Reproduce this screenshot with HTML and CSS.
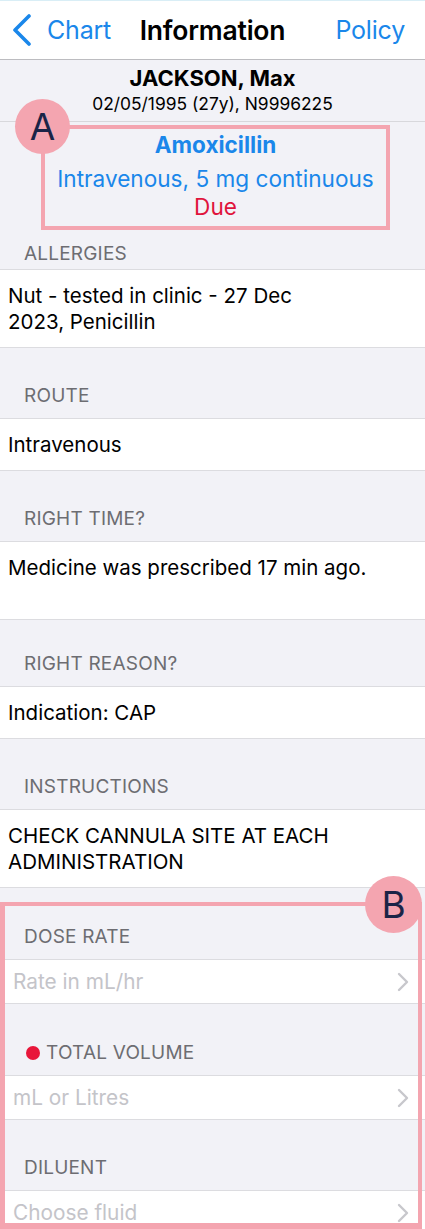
FILE: index.html
```html
<!DOCTYPE html>
<html lang="en">
<head>
<meta charset="utf-8">
<title>Information</title>
<link rel="stylesheet" href="styles.css">
</head>
<body>
<div class="screen">
  <header class="nav">
    <a class="nav-back">
      <svg class="nav-chevron" viewBox="0 0 20 32" aria-hidden="true"><path d="M17 2 L3 16 L17 30" fill="none" stroke="currentColor" stroke-width="3.6" stroke-linecap="round" stroke-linejoin="round"/></svg>
      <span>Chart</span>
    </a>
    <h1 class="nav-title">Information</h1>
    <a class="nav-action">Policy</a>
  </header>

  <section class="patient">
    <div class="patient-name">JACKSON, Max</div>
    <div class="patient-meta">02/05/1995 (27y), N9996225</div>
  </section>

  <section class="drug">
    <div class="callout-a">
      <span class="badge badge-a">A</span>
      <div class="drug-name">Amoxicillin</div>
      <div class="drug-dose">Intravenous, 5 mg continuous</div>
      <div class="drug-status">Due</div>
    </div>
  </section>

  <div class="group-head group-head-first">ALLERGIES</div>
  <div class="cell">Nut - tested in clinic - 27 Dec<br>2023, Penicillin</div>

  <div class="group-head">ROUTE</div>
  <div class="cell">Intravenous</div>

  <div class="group-head">RIGHT TIME?</div>
  <div class="cell cell-tall">Medicine was prescribed 17 min ago.</div>

  <div class="group-head group-head-short">RIGHT REASON?</div>
  <div class="cell">Indication: CAP</div>

  <div class="group-head">INSTRUCTIONS</div>
  <div class="cell">CHECK CANNULA SITE AT EACH<br>ADMINISTRATION</div>

  <div class="form">
    <div class="group-head group-head-wide">DOSE RATE</div>
    <div class="field">
      <span class="field-placeholder">Rate in mL/hr</span>
      <svg class="field-chevron" viewBox="0 0 12 20" aria-hidden="true"><path d="M2 2 L10 10 L2 18" fill="none" stroke="currentColor" stroke-width="2.4" stroke-linecap="round" stroke-linejoin="round"/></svg>
    </div>

    <div class="group-head group-head-wide"><span class="required-dot"></span>TOTAL VOLUME</div>
    <div class="field">
      <span class="field-placeholder">mL or Litres</span>
      <svg class="field-chevron" viewBox="0 0 12 20" aria-hidden="true"><path d="M2 2 L10 10 L2 18" fill="none" stroke="currentColor" stroke-width="2.4" stroke-linecap="round" stroke-linejoin="round"/></svg>
    </div>

    <div class="group-head">DILUENT</div>
    <div class="field">
      <span class="field-placeholder">Choose fluid</span>
      <svg class="field-chevron" viewBox="0 0 12 20" aria-hidden="true"><path d="M2 2 L10 10 L2 18" fill="none" stroke="currentColor" stroke-width="2.4" stroke-linecap="round" stroke-linejoin="round"/></svg>
    </div>

    <div class="callout-b">
      <span class="badge badge-b">B</span>
    </div>
  </div>
</div>
</body>
</html>
```

FILE: styles.css
```css
* { box-sizing: border-box; }

html, body {
  margin: 0;
  padding: 0;
}

body {
  background: #f2f2f7;
  font-family: Inter, "Noto Sans", sans-serif;
  color: #000;
  -webkit-font-smoothing: antialiased;
}

.screen {
  width: 425px;
  height: 1229px;
  overflow: hidden;
  position: relative;
}

/* Navigation bar */
.nav {
  height: 60px;
  background: #fff;
  border-top: 1px solid #d9eef6;
  border-bottom: 1px solid #bcbcc0;
  display: grid;
  grid-template-columns: 1fr auto 1fr;
  align-items: center;
  padding: 0 16px;
}

.nav-back {
  display: flex;
  align-items: center;
  gap: 15px;
  margin-left: -4px;
  color: #1a87ea;
  font-size: 25px;
  letter-spacing: -0.2px;
}

.nav-chevron {
  width: 20px;
  height: 32px;
  color: #1a87ea;
}

.nav-title {
  margin: 0;
  font-size: 26.5px;
  font-weight: 600;
  letter-spacing: -0.2px;
  text-align: center;
}

.nav-action {
  justify-self: end;
  margin-right: 4px;
  color: #1a87ea;
  font-size: 25px;
  letter-spacing: -0.2px;
}

/* Patient header */
.patient {
  text-align: center;
  border-bottom: 1px solid #d8d8dc;
  padding: 5px 0 6px;
  height: 62px;
}

.patient-name {
  font-size: 22px;
  font-weight: 700;
  line-height: 27px;
}

.patient-meta {
  font-size: 17.4px;
  line-height: 23px;
}

/* Drug block with callout A */
.drug {
  padding: 3px 35px 0 41px;
}

.callout-a {
  position: relative;
  border: 4px solid #f4a5b0;
  text-align: center;
  padding: 2px 0 5px;
}

.drug-name {
  color: #1a87ea;
  font-size: 22.5px;
  font-weight: 700;
  line-height: 28px;
  margin-bottom: 6px;
}

.drug-dose {
  color: #1a87ea;
  font-size: 22.6px;
  line-height: 28px;
}

.drug-status {
  color: #e0143c;
  font-size: 22.6px;
  line-height: 28px;
}

.badge {
  position: absolute;
  width: 55px;
  height: 55px;
  border-radius: 50%;
  background: #f4a5b0;
  color: #1b2447;
  font-size: 37px;
  line-height: 55px;
  text-align: center;
  font-weight: 400;
}

.badge-a {
  left: -30px;
  top: -30px;
}

/* Section headers */
.group-head {
  height: 70px;
  display: flex;
  align-items: flex-end;
  gap: 6px;
  padding: 0 24px 11px;
  font-size: 19px;
  line-height: 22px;
  color: #6d6d72;
  letter-spacing: 0.2px;
}

.group-head-first { height: 39px; padding-bottom: 4px; }
.group-head-short { height: 66px; }
.group-head-wide { height: 71px; }

.required-dot {
  width: 14px;
  height: 14px;
  border-radius: 50%;
  background: #e8173a;
  margin: 0 0 4px 2px;
  flex: none;
}

/* Cells */
.cell {
  background: #fff;
  border-top: 1px solid #dcdce0;
  border-bottom: 1px solid #dcdce0;
  padding: 13px 8px 12px;
  font-size: 20.5px;
  line-height: 26px;
}

.cell-tall { min-height: 79px; }

.form {
  position: relative;
}

.field {
  background: #fff;
  border-top: 1px solid #dcdce0;
  border-bottom: 1px solid #dcdce0;
  padding: 8px 16px 8px 13px;
  height: 45px;
  display: flex;
  align-items: center;
  justify-content: space-between;
  font-size: 20.8px;
  line-height: 26px;
}

.field-placeholder {
  color: #c4c4c9;
}

.field-chevron {
  width: 12px;
  height: 20px;
  color: #c7c7cc;
}

/* Callout B overlay */
.callout-b {
  position: absolute;
  left: 0;
  right: 3px;
  top: 14px;
  height: 327px;
  border: 5px solid #f4a5b0;
  border-width: 4px 4px 6px 5px;
  pointer-events: none;
}

.badge-b {
  right: -4px;
  top: -30px;
  width: 57px;
  height: 57px;
  line-height: 57px;
}
```
